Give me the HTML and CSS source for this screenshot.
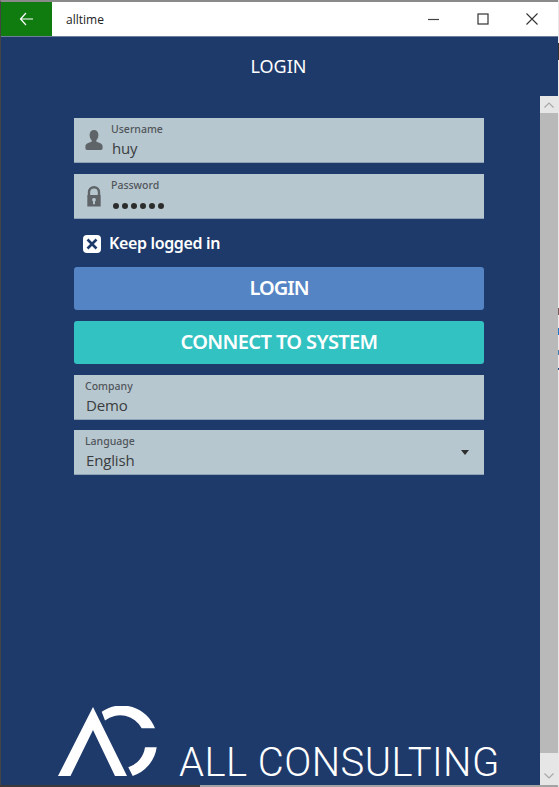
FILE: index.html
```html
<!DOCTYPE html>
<html lang="en">
<head>
<meta charset="utf-8">
<title>alltime</title>
<link rel="stylesheet" href="styles.css">
</head>
<body>
<div class="behind">
  <i class="bit bit-a"></i><i class="bit bit-b"></i><i class="bit bit-c"></i><i class="bit bit-d"></i><i class="bit bit-e"></i>
</div>
<div class="window">
  <header class="titlebar">
    <div class="back">
      <svg width="16" height="14" viewBox="0 0 16 14"><path d="M7 1 1.500 7 7 13M1.500 7H14" fill="none" stroke="#fff" stroke-width="1.200"/></svg>
    </div>
    <div class="app-name">alltime</div>
    <div class="win-controls">
      <span class="ctl"><svg width="12" height="12" viewBox="0 0 12 12"><path d="M0 6.500H11" stroke="#444" stroke-width="1.200"/></svg></span>
      <span class="ctl"><svg width="12" height="12" viewBox="0 0 12 12"><rect x="1" y="1" width="10" height="10" fill="none" stroke="#333" stroke-width="1.200"/></svg></span>
      <span class="ctl"><svg width="12" height="12" viewBox="0 0 12 12"><path d="M.5.5 11.500 11.500M11.500.5.5 11.500" stroke="#333" stroke-width="1.100"/></svg></span>
    </div>
  </header>
  <div class="body">
    <main class="main">
      <h1 class="page-title">LOGIN</h1>
      <form class="form">
        <div class="field has-icon">
          <svg class="icon" width="20" height="21" viewBox="0 0 20 22"><path d="M10 0c3 0 4.600 2.200 4.600 5.200 0 2.300-.9 4.400-2.100 5.400v1.800c2.300 1 6.500 1.800 6.500 4.800v2c0 1-.6 1.800-2 1.800H3c-1.400 0-2-.8-2-1.800v-2c0-3 4.200-3.800 6.500-4.800v-1.800C6.300 9.600 5.400 7.500 5.400 5.200 5.400 2.200 7 0 10 0z" fill="#5f6468"/></svg>
          <div class="field-text">
            <span class="label">Username</span>
            <span class="value">huy</span>
          </div>
        </div>
        <div class="field has-icon">
          <svg class="icon" width="20" height="21" viewBox="0 0 20 22"><path d="M3.500 9.500V6.500a6.500 6.500 0 0 1 13 0v3h.5v12H3v-12zM6 9.500h8v-3a4 4 0 0 0-8 0zm4 3a2 2 0 0 0-1 3.700V19h2v-2.800a2 2 0 0 0-1-3.700z" fill="#5f6468" fill-rule="evenodd"/></svg>
          <div class="field-text">
            <span class="label">Password</span>
            <span class="dots"><i></i><i></i><i></i><i></i><i></i><i></i></span>
          </div>
        </div>
        <div class="check-row">
          <span class="check"><svg width="12" height="12" viewBox="0 0 12 12"><path d="M1.500 1.500 10.500 10.500M10.500 1.500 1.500 10.500" stroke="#1e3a6b" stroke-width="2.600"/></svg></span>
          <span class="check-label">Keep logged in</span>
        </div>
        <div class="btn btn-login">LOGIN</div>
        <div class="btn btn-connect">CONNECT TO SYSTEM</div>
        <div class="field field-company">
          <div class="field-text">
            <span class="label">Company</span>
            <span class="value">Demo</span>
          </div>
        </div>
        <div class="field select">
          <div class="field-text">
            <span class="label">Language</span>
            <span class="value">English</span>
          </div>
          <span class="caret"></span>
        </div>
      </form>
      <footer class="brand">
        <svg class="logo" width="102" height="72" viewBox="57 706 102 72">
          <path d="M93 707 127 776H115L93 730 70.500 776H58z" fill="#fff"/>
          <path d="M101.700 711.700A35.500 35.500 0 0 1 155 728.300H141.700A24.500 24.500 0 0 0 105 720.500z" fill="#fff"/>
          <path d="M156.700 747.300A35.500 35.500 0 0 1 132.700 776L128.300 767.300A24.500 24.500 0 0 0 145 747.300z" fill="#fff"/>
        </svg>
        <span class="brand-name">ALL CONSULTING</span>
      </footer>
    </main>
    <aside class="scrollbar">
      <div class="sb-btn sb-up"><svg width="10" height="6" viewBox="0 0 10 6"><path d="M.5 5.500 5 1l4.500 4.500" fill="none" stroke="#a8a8a8" stroke-width="1.200"/></svg></div>
      <div class="sb-thumb"></div>
      <div class="sb-btn sb-down"><svg width="10" height="6" viewBox="0 0 10 6"><path d="M.5.5 5 5 9.500.5" fill="none" stroke="#a8a8a8" stroke-width="1.200"/></svg></div>
    </aside>
  </div>
  <div class="window-edge"></div>
</div>
</body>
</html>
```
FILE: styles.css
```css
* { box-sizing: border-box; }
html, body { margin: 0; height: 100%; overflow: hidden; background: #e9e9e9; }
body { font-family: "Noto Sans", sans-serif; }

.behind { position: absolute; left: 558px; top: 0; width: 1px; height: 787px; }
.bit { position: absolute; left: 0; width: 1px; display: block; }
.bit-a { top: 43px; height: 17px; background: #333; }
.bit-b { top: 308px; height: 7px; background: #7a5a5a; }
.bit-c { top: 328px; height: 7px; background: #1f78c8; }
.bit-d { top: 350px; height: 5px; background: #3f7fb5; }
.bit-e { top: 368px; height: 2px; background: #1e4f8f; }

.window {
  width: 558px;
  height: 787px;
  display: flex;
  flex-direction: column;
  border-top: 2px solid #8a8a8a;
  border-left: 1px solid #444;
  background: #1e3a6b;
  position: relative;
}

.window-edge {
  height: 2px;
  flex: none;
  margin-left: -1px;
  background: linear-gradient(to right, #3a3a3a 200px, #a3a3a3 200px);
}

.titlebar {
  height: 35px;
  flex: none;
  display: flex;
  align-items: center;
  background: #fff;
  border-bottom: 1px solid #6d7f9c;
}
.back {
  width: 51px;
  height: 100%;
  background: #107c10;
  display: flex;
  align-items: center;
  justify-content: center;
}
.app-name {
  margin-left: 14px;
  font: 12px "Open Sans", sans-serif;
  color: #222;
  flex: 1;
}
.win-controls { display: flex; padding-right: 20px; gap: 37px; align-items: center; }
.ctl { display: flex; width: 12px; height: 12px; }

.body { flex: 1; display: flex; min-height: 0; }
.main { flex: 1; display: flex; flex-direction: column; min-width: 0; }

.page-title {
  margin: 17px 0 0;
  height: 64px;
  padding-left: 16px;
  text-align: center;
  font: 400 18px/24px "Noto Sans", sans-serif;
  color: #fff;
}

.form {
  width: 410px;
  margin-left: 73px;
  display: flex;
  flex-direction: column;
}

.field {
  height: 45px;
  background: #b7c7cf;
  border-bottom: 1px solid #8fa2b5;
  display: flex;
  align-items: stretch;
  margin-bottom: 11px;
  padding-left: 11px;
  position: relative;
}
.field-company { margin-bottom: 10px; }
.has-icon { padding-left: 10px; }
.icon { align-self: center; flex: none; margin-right: 7px; }
.has-icon .icon { margin-top: 1px; }
.field-text { display: flex; flex-direction: column; padding-top: 4px; }
.label { font: 500 10.500px/14px "Noto Sans", sans-serif; color: #50555a; }
.value { font: 400 15px/20px "Open Sans", sans-serif; color: #3a3d40; margin-top: 2px; margin-left: 1px; letter-spacing: -.15px; }
.has-icon .value { margin-left: 1px; }

.dots { display: flex; gap: 3px; margin: 11px 0 0 2px; }
.dots i { width: 6px; height: 6px; border-radius: 50%; background: #2c2c2c; }

.check-row { display: flex; align-items: center; height: 17px; margin: 5px 0 15px 9px; }
.check {
  width: 18px;
  height: 18px;
  border-radius: 4px;
  background: #fff;
  display: flex;
  align-items: center;
  justify-content: center;
  flex: none;
}
.check-label { margin-left: 8px; font: 600 16px/17px "Noto Sans", sans-serif; letter-spacing: -.35px; color: #fff; }

.btn {
  height: 43px;
  border-radius: 3px;
  display: flex;
  align-items: center;
  justify-content: center;
  margin-bottom: 11px;
  font: 600 20px/1 "Noto Sans", sans-serif;
  color: #fff;
  padding-bottom: 2px;
}
.btn-login { background: #5584c4; letter-spacing: -1px; }
.btn-connect { background: #33c2c2; letter-spacing: -.6px; }

.select { margin-bottom: 0; }
.caret {
  position: absolute;
  right: 15px;
  top: 20px;
  border: 4.500px solid transparent;
  border-top: 5px solid #2f2f2f;
  border-bottom: 0;
}

.brand {
  margin-top: auto;
  padding: 0 0 7px 56px;
  display: flex;
  align-items: flex-end;
}
.logo { flex: none; display: block; }
.brand-name {
  margin-left: 20px;
  font: 300 40px/38px Roboto, sans-serif;
  letter-spacing: .45px;
  color: #fff;
  white-space: nowrap;
  margin-bottom: -4px;
}

.scrollbar {
  width: 18px;
  flex: none;
  margin-top: 59px;
  display: flex;
  flex-direction: column;
  background: #b9b9b9;
}
.sb-btn { background: #e6e6e6; display: flex; justify-content: center; flex: none; }
.sb-up { height: 17px; padding-top: 6px; }
.sb-down { height: 32px; padding-top: 20px; }
.sb-thumb { flex: 1; }
```
